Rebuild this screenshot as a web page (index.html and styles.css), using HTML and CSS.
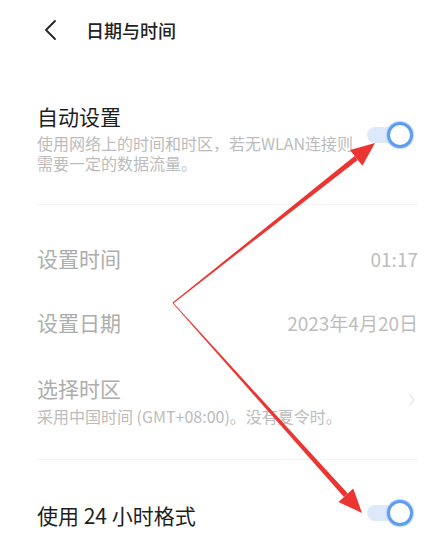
FILE: index.html
```html
<!DOCTYPE html>
<html lang="zh-CN">
<head>
    <meta charset="UTF-8">
    <meta name="viewport" content="width=device-width, initial-scale=1.0">
    <title>日期与时间</title>
    <link rel="stylesheet" href="styles.css">
</head>
<body>
    <div class="page">
        <div class="topbar">
            <svg class="back" width="14" height="22" viewBox="0 0 14 22">
                <path d="M12 2 L3 11 L12 20" fill="none" stroke="#222" stroke-width="1.8" stroke-linecap="round" stroke-linejoin="round"/>
            </svg>
            <h1>日期与时间</h1>
        </div>

        <div class="group auto">
            <div class="auto-text">
                <div class="label dark">自动设置</div>
                <div class="desc">使用网络上的时间和时区，若无WLAN连接则需要一定的数据流量。</div>
            </div>
            <span class="switch on"><span class="knob"></span></span>
        </div>

        <div class="group list">
            <div class="row">
                <div class="label">设置时间</div>
                <div class="value">01:17</div>
            </div>
            <div class="row">
                <div class="label">设置日期</div>
                <div class="value">2023年4月20日</div>
            </div>
            <div class="row zone">
                <div>
                    <div class="label">选择时区</div>
                    <div class="desc">采用中国时间 (GMT+08:00)。没有夏令时。</div>
                </div>
                <svg class="chev" width="8" height="12" viewBox="0 0 8 12">
                    <path d="M2 1 L6 6 L2 11" fill="none" stroke="#e8e8e8" stroke-width="1.5" stroke-linecap="round"/>
                </svg>
            </div>
        </div>

        <div class="group last">
            <div class="row">
                <div class="label dark">使用 24 小时格式</div>
                <span class="switch on"><span class="knob"></span></span>
            </div>
        </div>

        <!-- red annotation arrows drawn over the screenshot -->
        <svg class="annot" width="443" height="552" viewBox="0 0 443 552">
            <polygon points="172.7,302.6 173.3,303.4 357.8,159.9 354.6,155.9" fill="#ec3431"/>
            <polygon points="375,143 362.4,165.7 350.0,150.1" fill="#ec3431"/>
            <polygon points="172.7,303.3 173.3,302.7 347.8,493.5 344.0,496.9" fill="#ec3431"/>
            <polygon points="362,513 338.5,501.9 353.3,488.5" fill="#ec3431"/>
        </svg>
    </div>
</body>
</html>
```

FILE: styles.css
```css
* {
    margin: 0;
    padding: 0;
    box-sizing: border-box;
}

body {
    font-family: "Noto Sans CJK SC", "Noto Sans", sans-serif;
    background: #fff;
    color: #222;
}

.page {
    position: relative;
    width: 443px;
    height: 552px;
    overflow: hidden;
}

.topbar {
    height: 60px;
    display: flex;
    align-items: center;
    padding-left: 43px;
    gap: 29px;
}

.topbar h1 {
    font-size: 18px;
    font-weight: 500;
    color: #222;
}

.group {
    margin: 0 25px 0 37px;
    border-bottom: 1px solid #f4f4f4;
}

.group.last {
    border-bottom: none;
    padding-top: 27px;
}

.auto {
    display: flex;
    align-items: center;
    justify-content: space-between;
    padding: 42px 0 31px;
}

.auto-text {
    width: 322px;
}

.label {
    font-size: 21px;
    line-height: 28px;
    color: #adadad;
}

.label.dark {
    color: #1e1e1e;
}

.desc {
    font-size: 16px;
    line-height: 20px;
    color: #bcbcbc;
    margin-top: 3px;
}

.zone .desc {
    margin-top: 4px;
}

.list {
    padding: 21px 0 33px;
}

.row {
    height: 64px;
    display: flex;
    align-items: center;
    justify-content: space-between;
}

.row.zone {
    height: auto;
    padding-top: 20px;
    align-items: center;
}

.value {
    font-size: 19px;
    color: #bdbdbd;
}

.chev {
    margin-right: 2px;
}

.last .row {
    height: 56px;
}

.switch {
    position: relative;
    width: 46px;
    height: 26px;
    margin-right: 5px;
    margin-bottom: 6px;
    flex-shrink: 0;
}

.last .switch {
    margin-bottom: 4px;
}

.switch::before {
    content: "";
    position: absolute;
    left: 0;
    top: 5px;
    width: 32px;
    height: 16px;
    border-radius: 8px;
    background: #dde9fb;
}

.knob {
    position: absolute;
    right: 0;
    top: 0;
    width: 26px;
    height: 26px;
    border-radius: 50%;
    border: 3px solid #5f9eee;
    background: #fff;
    box-shadow: 0 0 1px 1px #b8d3f7;
}

.annot {
    position: absolute;
    left: 0;
    top: 0;
    pointer-events: none;
}
```
